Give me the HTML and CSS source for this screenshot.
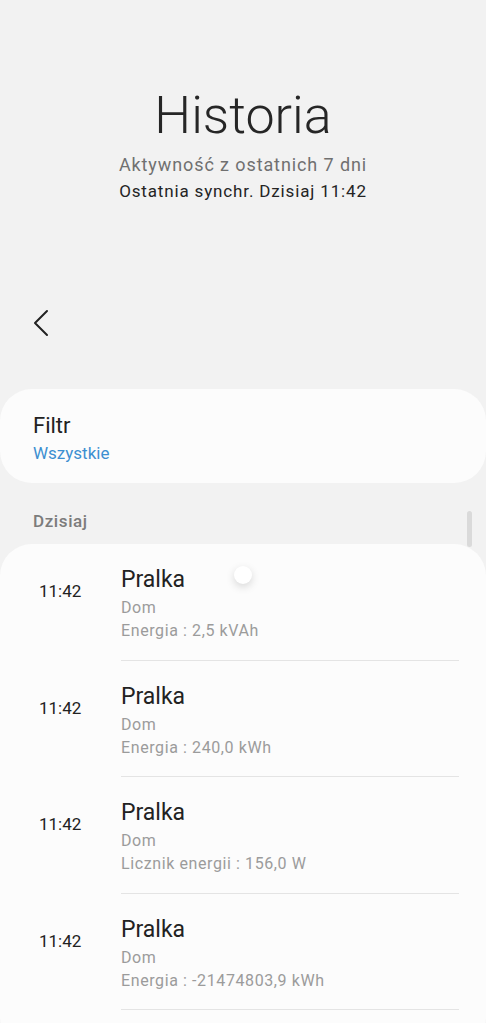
FILE: index.html
```html
<!DOCTYPE html>
<html>
<head>
<meta charset="utf-8">
<link rel="stylesheet" href="styles.css">
</head>
<body>

<!-- Header -->
<div class="header">
  <h1 class="title">Historia</h1>
  <div class="subtitle">Aktywność z ostatnich 7 dni</div>
  <div class="sync">Ostatnia synchr. Dzisiaj 11:42</div>
</div>

<!-- Toolbar -->
<div class="toolbar">
  <svg class="back" width="20" height="30" viewBox="0 0 20 30">
    <path d="M14 2 L2 14 L14 26" fill="none" stroke="#222" stroke-width="2" stroke-linecap="round" stroke-linejoin="round"/>
  </svg>
</div>

<!-- Filter -->
<div class="card filter">
  <div class="filter-title">Filtr</div>
  <div class="filter-value">Wszystkie</div>
</div>

<div class="section">
  <span>Dzisiaj</span>
  <div class="scrollbar"></div>
</div>

<!-- History list -->
<div class="card list">
  <div class="dot"></div>
  <div class="row">
    <div class="time">11:42</div>
    <div class="info">
      <div class="name">Pralka</div>
      <div class="meta">Dom</div>
      <div class="meta">Energia : 2,5 kVAh</div>
    </div>
  </div>
  <div class="row">
    <div class="time">11:42</div>
    <div class="info">
      <div class="name">Pralka</div>
      <div class="meta">Dom</div>
      <div class="meta">Energia : 240,0 kWh</div>
    </div>
  </div>
  <div class="row">
    <div class="time">11:42</div>
    <div class="info">
      <div class="name">Pralka</div>
      <div class="meta">Dom</div>
      <div class="meta">Licznik energii : 156,0 W</div>
    </div>
  </div>
  <div class="row">
    <div class="time">11:42</div>
    <div class="info">
      <div class="name">Pralka</div>
      <div class="meta">Dom</div>
      <div class="meta">Energia : -21474803,9 kWh</div>
    </div>
  </div>
</div>

</body>
</html>
```

FILE: styles.css
```css
body {
  margin: 0;
  padding: 0;
  font-family: Roboto, "Noto Sans", sans-serif;
  background-color: #f2f2f2;
  color: #222;
  overflow: hidden;
}

/* Header */
.header {
  padding-top: 84px;
  text-align: center;
}

.title {
  margin: 0;
  font-size: 52px;
  font-weight: 300;
  line-height: 64px;
  color: #262626;
}

.subtitle {
  margin-top: 3px;
  font-size: 18px;
  line-height: 27px;
  letter-spacing: 0.9px;
  color: #707070;
}

.sync {
  font-size: 17px;
  line-height: 27px;
  letter-spacing: 0.85px;
  color: #242424;
}

/* Toolbar */
.toolbar {
  height: 80px;
  margin-top: 104px;
  padding-left: 33px;
}

.back {
  display: block;
}

/* Cards */
.card {
  background-color: #fcfcfc;
  border-radius: 32px;
}

.filter {
  height: 94px;
  padding: 22px 33px 0;
  box-sizing: border-box;
}

.filter-title {
  font-size: 22px;
  line-height: 30px;
  color: #222;
}

.filter-value {
  font-size: 17px;
  line-height: 24px;
  color: #3c8fd1;
}

/* Section header */
.section {
  position: relative;
  height: 61px;
  padding: 28px 33px 0;
  box-sizing: border-box;
  font-size: 17px;
  font-weight: 500;
  letter-spacing: 0.6px;
  color: #7c7c7c;
}

.scrollbar {
  position: absolute;
  right: 14px;
  top: 28px;
  width: 5px;
  height: 36px;
  border-radius: 3px;
  background-color: #dadada;
}

/* List */
.list {
  position: relative;
  padding-bottom: 40px;
}

.row {
  display: flex;
  height: 116.5px;
}

.time {
  width: 82px;
  padding-left: 39px;
  padding-top: 37px;
  font-size: 17px;
  color: #222;
}

.info {
  flex: 1;
  margin-right: 27px;
  padding-top: 20px;
  border-bottom: 1px solid #e4e4e4;
}

.name {
  font-size: 23px;
  line-height: 32px;
  color: #222;
}

.meta {
  font-size: 16px;
  line-height: 23px;
  letter-spacing: 0.6px;
  color: #9b9b9b;
}

.dot {
  position: absolute;
  left: 234px;
  top: 22px;
  width: 18px;
  height: 18px;
  border-radius: 50%;
  background-color: #fff;
  box-shadow: 0 3px 8px rgba(0, 0, 0, 0.15);
}
```
